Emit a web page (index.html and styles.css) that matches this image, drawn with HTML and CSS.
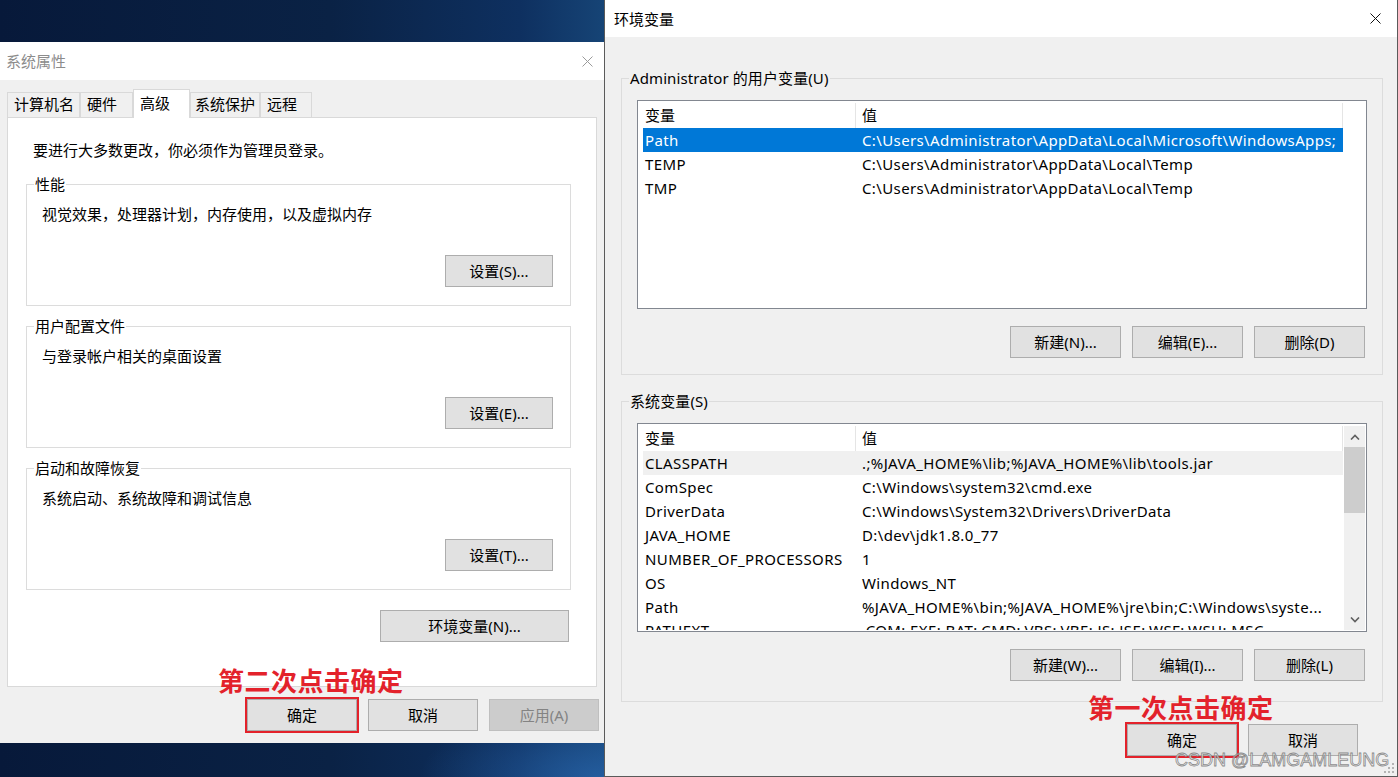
FILE: index.html
```html
<!DOCTYPE html>
<html lang="zh-CN">
<head>
<meta charset="utf-8">
<title>环境变量</title>
<link rel="stylesheet" href="styles.css">
</head>
<body>
  <section class="win win-sys">
    <header class="titlebar titlebar-inactive">
      <span class="title">系统属性</span>
      <svg class="close" width="11" height="11" viewBox="0 0 11 11"><path d="M0.5 0.5L10.5 10.5M10.5 0.5L0.5 10.5"/></svg>
    </header>
    <div class="sys-body">
      <div class="tabs">
        <div class="tab tab-w1">计算机名</div>
        <div class="tab tab-w2">硬件</div>
        <div class="tab tab-w3 tab-active">高级</div>
        <div class="tab tab-w4">系统保护</div>
        <div class="tab tab-w5">远程</div>
      </div>
      <div class="tabpanel">
        <p class="intro">要进行大多数更改，你必须作为管理员登录。</p>
        <fieldset class="sgroup">
          <legend>性能</legend>
          <p class="desc">视觉效果，处理器计划，内存使用，以及虚拟内存</p>
          <div class="grp-actions"><button class="btn btn-set">设置(S)...</button></div>
        </fieldset>
        <fieldset class="sgroup">
          <legend>用户配置文件</legend>
          <p class="desc">与登录帐户相关的桌面设置</p>
          <div class="grp-actions"><button class="btn btn-set">设置(E)...</button></div>
        </fieldset>
        <fieldset class="sgroup">
          <legend>启动和故障恢复</legend>
          <p class="desc">系统启动、系统故障和调试信息</p>
          <div class="grp-actions"><button class="btn btn-set">设置(T)...</button></div>
        </fieldset>
        <div class="env-row"><button class="btn btn-env">环境变量(N)...</button></div>
      </div>
      <div class="dlg-buttons sys-buttons">
        <button class="btn btn-dlg marked">确定</button>
        <button class="btn btn-dlg">取消</button>
        <button class="btn btn-dlg disabled">应用(A)</button>
      </div>
    </div>
  </section>

  <section class="win win-env">
    <header class="titlebar">
      <span class="title">环境变量</span>
      <svg class="close" width="11" height="11" viewBox="0 0 11 11"><path d="M0.5 0.5L10.5 10.5M10.5 0.5L0.5 10.5"/></svg>
    </header>
    <div class="env-body">
      <fieldset class="egroup">
        <legend>Administrator 的用户变量(U)</legend>
        <div class="listview">
          <div class="lv-content">
            <div class="lv-row lv-head"><span class="c1">变量</span><span class="c2">值</span></div>
            <div class="lv-row lv-selected"><span class="c1">Path</span><span class="c2">C:\Users\Administrator\AppData\Local\Microsoft\WindowsApps;</span></div>
            <div class="lv-row"><span class="c1">TEMP</span><span class="c2">C:\Users\Administrator\AppData\Local\Temp</span></div>
            <div class="lv-row"><span class="c1">TMP</span><span class="c2">C:\Users\Administrator\AppData\Local\Temp</span></div>
          </div>
          <div class="lv-gutter"></div>
        </div>
        <div class="btn-row">
          <button class="btn btn-list">新建(N)...</button>
          <button class="btn btn-list">编辑(E)...</button>
          <button class="btn btn-list">删除(D)</button>
        </div>
      </fieldset>

      <fieldset class="egroup egroup-sys">
        <legend>系统变量(S)</legend>
        <div class="listview">
          <div class="lv-content">
            <div class="lv-row lv-head"><span class="c1">变量</span><span class="c2">值</span></div>
            <div class="lv-row lv-inactive-sel"><span class="c1">CLASSPATH</span><span class="c2">.;%JAVA_HOME%\lib;%JAVA_HOME%\lib\tools.jar</span></div>
            <div class="lv-row"><span class="c1">ComSpec</span><span class="c2">C:\Windows\system32\cmd.exe</span></div>
            <div class="lv-row"><span class="c1">DriverData</span><span class="c2">C:\Windows\System32\Drivers\DriverData</span></div>
            <div class="lv-row"><span class="c1">JAVA_HOME</span><span class="c2">D:\dev\jdk1.8.0_77</span></div>
            <div class="lv-row"><span class="c1">NUMBER_OF_PROCESSORS</span><span class="c2">1</span></div>
            <div class="lv-row"><span class="c1">OS</span><span class="c2">Windows_NT</span></div>
            <div class="lv-row"><span class="c1">Path</span><span class="c2">%JAVA_HOME%\bin;%JAVA_HOME%\jre\bin;C:\Windows\syste...</span></div>
            <div class="lv-row lv-partial"><span class="c1">PATHEXT</span><span class="c2">.COM;.EXE;.BAT;.CMD;.VBS;.VBE;.JS;.JSE;.WSF;.WSH;.MSC</span></div>
          </div>
          <div class="scrollbar">
            <div class="sb-arrow"><svg width="10" height="6" viewBox="0 0 10 6"><path d="M1 5.5L5 1.5L9 5.5"/></svg></div>
            <div class="sb-track"><div class="sb-thumb"></div></div>
            <div class="sb-arrow"><svg width="10" height="6" viewBox="0 0 10 6"><path d="M1 0.5L5 4.5L9 0.5"/></svg></div>
          </div>
        </div>
        <div class="btn-row">
          <button class="btn btn-list">新建(W)...</button>
          <button class="btn btn-list">编辑(I)...</button>
          <button class="btn btn-list">删除(L)</button>
        </div>
      </fieldset>

      <div class="dlg-buttons env-buttons">
        <button class="btn btn-dlg marked">确定</button>
        <button class="btn btn-dlg">取消</button>
      </div>
    </div>
    <svg class="grip" width="11" height="11" viewBox="0 0 11 11">
      <rect x="8" y="0" width="2" height="2"/>
      <rect x="4" y="4" width="2" height="2"/><rect x="8" y="4" width="2" height="2"/>
      <rect x="0" y="8" width="2" height="2"/><rect x="4" y="8" width="2" height="2"/><rect x="8" y="8" width="2" height="2"/>
    </svg>
  </section>

  <div class="annot annot-second">第二次点击确定</div>
  <div class="annot annot-first">第一次点击确定</div>
  <div class="watermark">CSDN @LAMGAMLEUNG</div>
</body>
</html>
```

FILE: styles.css
```css
* { box-sizing: border-box; }
html, body { margin: 0; padding: 0; }
body {
  width: 1398px;
  height: 777px;
  overflow: hidden;
  position: relative;
  font-family: "Noto Sans", "Noto Sans CJK SC", sans-serif;
  font-size: 15px;
  line-height: 20px;
  color: #000;
  background:
    radial-gradient(ellipse 180px 70px at 600px 777px, rgba(40,100,170,0.75), rgba(40,100,170,0) 100%),
    linear-gradient(90deg, #07193a 0px, #0a2245 330px, #0e3060 520px, #164476 605px, #164476 100%);
}
p { margin: 0; }
button {
  appearance: none;
  -webkit-appearance: none;
  font: inherit;
  color: inherit;
  margin: 0;
  padding: 0;
}

/* windows */
.win { position: absolute; display: flex; flex-direction: column; }
.win-sys { left: 0; top: 42px; width: 605px; height: 701px; background: #f0f0f0; }
.win-env {
  left: 604px; top: 0; width: 794px; height: 777px;
  background: #f0f0f0;
  border: 1px solid #5a5a5a;
  border-top: 0;
  z-index: 2;
}

.titlebar {
  flex: none;
  display: flex;
  align-items: center;
  justify-content: space-between;
  background: #fff;
}
.win-sys .titlebar { height: 38px; padding: 0 12px 0 6px; }
.win-env .titlebar { height: 37px; padding: 0 16px 0 9px; }
.title { white-space: nowrap; }
.titlebar-inactive .title { color: #8c8c8c; }
.close { display: block; }
.close path { stroke: #111; stroke-width: 1; fill: none; }
.titlebar-inactive .close path { stroke: #9a9a9a; }

/* buttons */
.btn {
  display: block;
  height: 32px;
  background: #e1e1e1;
  border: 1px solid #adadad;
  text-align: center;
  line-height: 30px;
  white-space: nowrap;
}
.btn-set { width: 108px; }
.btn-env { width: 189px; }
.btn-dlg { width: 110px; }
.btn-list { width: 111px; }
.btn.disabled { background: #cccccc; border-color: #bfbfbf; color: #838383; }
.btn.marked { outline: 2px solid #e3222b; outline-offset: 0; }

.dlg-buttons { display: flex; justify-content: flex-end; gap: 11px; }

/* system properties */
.sys-body { flex: 1; padding: 9px 6px 12px 7px; display: flex; flex-direction: column; }
.tabs { display: flex; align-items: flex-end; height: 28px; }
.tab {
  height: 25px;
  border: 1px solid #d9d9d9;
  border-bottom: 0;
  background: #f0f0f0;
  padding-left: 6px;
  line-height: 23px;
  white-space: nowrap;
}
.tab-w1 { width: 73px; }
.tab-w2 { width: 53px; }
.tab-w3 { width: 57px; }
.tab-w4 { width: 70px; padding-left: 4px; }
.tab-w5 { width: 52px; }
.tab-active {
  height: 29px;
  margin-bottom: -1px;
  background: #fff;
  position: relative;
  z-index: 1;
  line-height: 26px;
}
.tabpanel {
  width: 590px;
  border: 1px solid #d9d9d9;
  background: #fff;
  padding: 22px 25px 44px 18px;
}
.intro { margin-left: 7px; }
.sgroup {
  margin: 10px 0 0 0;
  border: 1px solid #dcdcdc;
  padding: 10px 17px 18px 7px;
  min-width: 0;
}
.intro + .sgroup { margin-top: 14px; }
.sgroup legend, .egroup legend { padding: 0 1px; line-height: 20px; }
.egroup legend { letter-spacing: 0.1px; }
.desc { margin-left: 8px; }
.grp-actions { display: flex; justify-content: flex-end; margin-top: 31px; }
.env-row { display: flex; justify-content: flex-end; margin: 20px 2px 0 0; }
.sys-buttons { margin-top: 12px; }

/* environment variables */
.env-body { flex: 1; padding: 31px 14px 20px 16px; display: flex; flex-direction: column; }
.egroup {
  margin: 0;
  border: 1px solid #dcdcdc;
  padding: 12px 15px 16px 7px;
  min-width: 0;
}
.egroup-sys { margin-top: 16px; padding-bottom: 20px; }
.listview {
  margin-left: 8px;
  height: 209px;
  border: 1px solid #828790;
  background: #fff;
  display: flex;
  padding: 2px 1px 1px 5px;
  overflow: hidden;
}
.lv-content { flex: 1; min-width: 0; overflow: hidden; }
.lv-gutter { width: 21px; margin-left: 1px; }
.lv-row {
  display: grid;
  grid-template-columns: 213px 1fr;
  height: 24px;
  line-height: 24px;
  white-space: nowrap;
  letter-spacing: 0.38px;
}
.lv-row span { overflow: hidden; }
.lv-row .c1 { padding-left: 2px; }
.lv-row .c2 { padding-left: 6px; }
.lv-head { height: 25px; line-height: 25px; letter-spacing: 0; }
.lv-head .c1 { border-right: 1px solid #e5e5e5; }
.lv-head .c2 { border-right: 1px solid #e5e5e5; }
.lv-selected { background: #0078d7; color: #fff; }
.lv-inactive-sel { background: #f0f0f0; }
.lv-partial { line-height: 22px; }

.scrollbar {
  width: 21px;
  margin-left: 1px;
  background: #f0f0f0;
  display: flex;
  flex-direction: column;
}
.sb-arrow { height: 21px; display: flex; align-items: center; justify-content: center; flex: none; }
.sb-arrow path { stroke: #606060; stroke-width: 1.6; fill: none; }
.sb-track { flex: 1; }
.sb-thumb { height: 66px; background: #cdcdcd; }

.btn-row { display: flex; justify-content: flex-end; gap: 11px; margin: 17px 2px 0 0; }
.env-buttons { margin-top: 22px; padding-right: 25px; }

.grip { position: absolute; right: 2px; bottom: 2px; }
.grip rect { fill: #b4b4b4; }

/* annotations overlaying the screenshot */
.annot {
  position: absolute;
  z-index: 5;
  font-family: "Noto Sans CJK SC", sans-serif;
  font-weight: 700;
  font-size: 26px;
  line-height: 32px;
  letter-spacing: 0.5px;
  color: #e3222b;
  white-space: nowrap;
}
.annot-second { left: 218px; top: 664px; }
.annot-first { left: 1088px; top: 691px; }

.watermark {
  position: absolute;
  z-index: 6;
  left: 1175px;
  top: 749px;
  font-family: "Liberation Sans", Arial, sans-serif;
  font-size: 18px;
  line-height: 22px;
  color: rgba(245,245,245,0.75);
  -webkit-text-stroke: 0.8px rgba(110,110,110,0.8);
  white-space: nowrap;
}
```
